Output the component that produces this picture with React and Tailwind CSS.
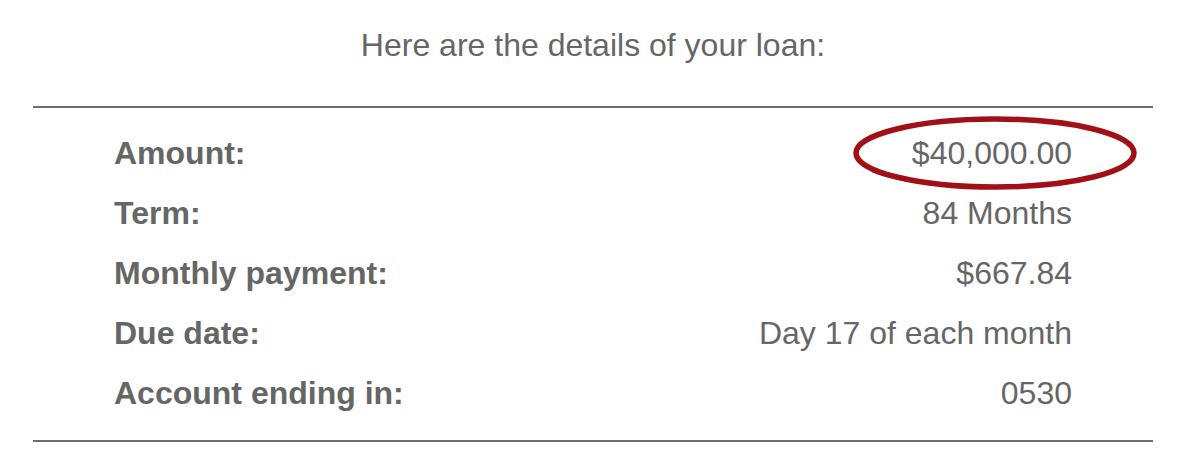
export default function App() {
  const rows = [
    ["Amount:", "$40,000.00"],
    ["Term:", "84 Months"],
    ["Monthly payment:", "$667.84"],
    ["Due date:", "Day 17 of each month"],
    ["Account ending in:", "0530"],
  ];

  return (
    <div className="min-h-screen bg-white text-[#666666]" style={{ fontFamily: '"Liberation Sans", Arial, sans-serif' }}>
      <div className="ml-[33px] mr-[40px]">
        <p className="pt-[27px] text-center text-[32px] leading-[36px]">Here are the details of your loan:</p>

        <div className="mt-[43px] border-y-2 border-[#6e6e6e] px-[81px] pt-[15px] pb-[17px]">
          {rows.map(([label, value], i) => (
            <div key={label} className="relative flex h-[60px] items-center justify-between text-[32px]">
              <span className="font-bold">{label}</span>
              <span>{value}</span>
              {i === 0 && (
                <svg
                  className="absolute right-[-67px] top-[-9px]"
                  width="288"
                  height="78"
                  viewBox="0 0 288 78"
                  fill="none"
                >
                  <ellipse cx="144" cy="39" rx="139" ry="34" stroke="#a30f16" strokeWidth="5.5" />
                  <path d="M22 57 C 70 77, 210 79, 268 55" stroke="#a30f16" strokeWidth="3" strokeLinecap="round" />
                </svg>
              )}
            </div>
          ))}
        </div>
      </div>
    </div>
  );
}
